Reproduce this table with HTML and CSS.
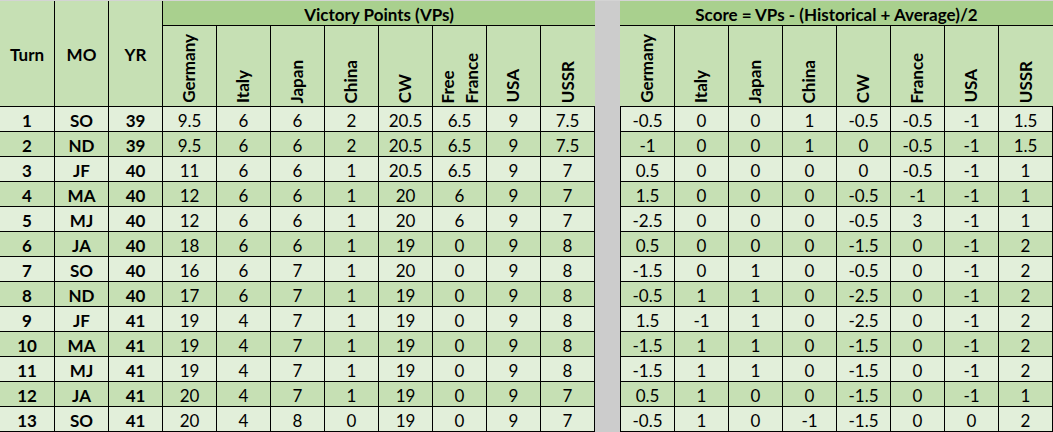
FILE: index.html
```html
<!DOCTYPE html>
<html>
<head>
<meta charset="utf-8">
<link rel="stylesheet" href="styles.css">
</head>
<body>
<div class="sheet">
  <div class="grid left">
    <div class="cell fixed b">Turn</div>
    <div class="cell fixed b">MO</div>
    <div class="cell fixed b">YR</div>
    <div class="cell band b span8">Victory Points (VPs)</div>
    <div class="cell vhead"><span class="vtext">Germany</span></div>
    <div class="cell vhead"><span class="vtext">Italy</span></div>
    <div class="cell vhead"><span class="vtext">Japan</span></div>
    <div class="cell vhead"><span class="vtext">China</span></div>
    <div class="cell vhead"><span class="vtext">CW</span></div>
    <div class="cell vhead"><span class="vtext two">Free<br>France</span></div>
    <div class="cell vhead"><span class="vtext">USA</span></div>
    <div class="cell vhead last"><span class="vtext">USSR</span></div>

    <div class="row lt"><div class="cell b">1</div><div class="cell b">SO</div><div class="cell b">39</div><div class="cell">9.5</div><div class="cell">6</div><div class="cell">6</div><div class="cell">2</div><div class="cell">20.5</div><div class="cell">6.5</div><div class="cell">9</div><div class="cell">7.5</div></div>
    <div class="row dk"><div class="cell b">2</div><div class="cell b">ND</div><div class="cell b">39</div><div class="cell">9.5</div><div class="cell">6</div><div class="cell">6</div><div class="cell">2</div><div class="cell">20.5</div><div class="cell">6.5</div><div class="cell">9</div><div class="cell">7.5</div></div>
    <div class="row lt"><div class="cell b">3</div><div class="cell b">JF</div><div class="cell b">40</div><div class="cell">11</div><div class="cell">6</div><div class="cell">6</div><div class="cell">1</div><div class="cell">20.5</div><div class="cell">6.5</div><div class="cell">9</div><div class="cell">7</div></div>
    <div class="row dk"><div class="cell b">4</div><div class="cell b">MA</div><div class="cell b">40</div><div class="cell">12</div><div class="cell">6</div><div class="cell">6</div><div class="cell">1</div><div class="cell">20</div><div class="cell">6</div><div class="cell">9</div><div class="cell">7</div></div>
    <div class="row lt"><div class="cell b">5</div><div class="cell b">MJ</div><div class="cell b">40</div><div class="cell">12</div><div class="cell">6</div><div class="cell">6</div><div class="cell">1</div><div class="cell">20</div><div class="cell">6</div><div class="cell">9</div><div class="cell">7</div></div>
    <div class="row dk"><div class="cell b">6</div><div class="cell b">JA</div><div class="cell b">40</div><div class="cell">18</div><div class="cell">6</div><div class="cell">6</div><div class="cell">1</div><div class="cell">19</div><div class="cell">0</div><div class="cell">9</div><div class="cell">8</div></div>
    <div class="row lt"><div class="cell b">7</div><div class="cell b">SO</div><div class="cell b">40</div><div class="cell">16</div><div class="cell">6</div><div class="cell">7</div><div class="cell">1</div><div class="cell">20</div><div class="cell">0</div><div class="cell">9</div><div class="cell">8</div></div>
    <div class="row dk"><div class="cell b">8</div><div class="cell b">ND</div><div class="cell b">40</div><div class="cell">17</div><div class="cell">6</div><div class="cell">7</div><div class="cell">1</div><div class="cell">19</div><div class="cell">0</div><div class="cell">9</div><div class="cell">8</div></div>
    <div class="row lt"><div class="cell b">9</div><div class="cell b">JF</div><div class="cell b">41</div><div class="cell">19</div><div class="cell">4</div><div class="cell">7</div><div class="cell">1</div><div class="cell">19</div><div class="cell">0</div><div class="cell">9</div><div class="cell">8</div></div>
    <div class="row dk"><div class="cell b">10</div><div class="cell b">MA</div><div class="cell b">41</div><div class="cell">19</div><div class="cell">4</div><div class="cell">7</div><div class="cell">1</div><div class="cell">19</div><div class="cell">0</div><div class="cell">9</div><div class="cell">8</div></div>
    <div class="row lt"><div class="cell b">11</div><div class="cell b">MJ</div><div class="cell b">41</div><div class="cell">19</div><div class="cell">4</div><div class="cell">7</div><div class="cell">1</div><div class="cell">19</div><div class="cell">0</div><div class="cell">9</div><div class="cell">8</div></div>
    <div class="row dk"><div class="cell b">12</div><div class="cell b">JA</div><div class="cell b">41</div><div class="cell">20</div><div class="cell">4</div><div class="cell">7</div><div class="cell">1</div><div class="cell">19</div><div class="cell">0</div><div class="cell">9</div><div class="cell">7</div></div>
    <div class="row lt"><div class="cell b">13</div><div class="cell b">SO</div><div class="cell b">41</div><div class="cell">20</div><div class="cell">4</div><div class="cell">8</div><div class="cell">0</div><div class="cell">19</div><div class="cell">0</div><div class="cell">9</div><div class="cell">7</div></div>
  </div>

  <div class="gap"></div>

  <div class="grid right">
    <div class="cell band b span8">Score = VPs - (Historical + Average)/2</div>
    <div class="cell vhead"><span class="vtext">Germany</span></div>
    <div class="cell vhead"><span class="vtext">Italy</span></div>
    <div class="cell vhead"><span class="vtext">Japan</span></div>
    <div class="cell vhead"><span class="vtext">China</span></div>
    <div class="cell vhead"><span class="vtext">CW</span></div>
    <div class="cell vhead"><span class="vtext">France</span></div>
    <div class="cell vhead"><span class="vtext">USA</span></div>
    <div class="cell vhead last"><span class="vtext">USSR</span></div>

    <div class="row lt"><div class="cell first">-0.5</div><div class="cell">0</div><div class="cell">0</div><div class="cell">1</div><div class="cell">-0.5</div><div class="cell">-0.5</div><div class="cell">-1</div><div class="cell">1.5</div></div>
    <div class="row dk"><div class="cell first">-1</div><div class="cell">0</div><div class="cell">0</div><div class="cell">1</div><div class="cell">0</div><div class="cell">-0.5</div><div class="cell">-1</div><div class="cell">1.5</div></div>
    <div class="row lt"><div class="cell first">0.5</div><div class="cell">0</div><div class="cell">0</div><div class="cell">0</div><div class="cell">0</div><div class="cell">-0.5</div><div class="cell">-1</div><div class="cell">1</div></div>
    <div class="row dk"><div class="cell first">1.5</div><div class="cell">0</div><div class="cell">0</div><div class="cell">0</div><div class="cell">-0.5</div><div class="cell">-1</div><div class="cell">-1</div><div class="cell">1</div></div>
    <div class="row lt"><div class="cell first">-2.5</div><div class="cell">0</div><div class="cell">0</div><div class="cell">0</div><div class="cell">-0.5</div><div class="cell">3</div><div class="cell">-1</div><div class="cell">1</div></div>
    <div class="row dk"><div class="cell first">0.5</div><div class="cell">0</div><div class="cell">0</div><div class="cell">0</div><div class="cell">-1.5</div><div class="cell">0</div><div class="cell">-1</div><div class="cell">2</div></div>
    <div class="row lt"><div class="cell first">-1.5</div><div class="cell">0</div><div class="cell">1</div><div class="cell">0</div><div class="cell">-0.5</div><div class="cell">0</div><div class="cell">-1</div><div class="cell">2</div></div>
    <div class="row dk"><div class="cell first">-0.5</div><div class="cell">1</div><div class="cell">1</div><div class="cell">0</div><div class="cell">-2.5</div><div class="cell">0</div><div class="cell">-1</div><div class="cell">2</div></div>
    <div class="row lt"><div class="cell first">1.5</div><div class="cell">-1</div><div class="cell">1</div><div class="cell">0</div><div class="cell">-2.5</div><div class="cell">0</div><div class="cell">-1</div><div class="cell">2</div></div>
    <div class="row dk"><div class="cell first">-1.5</div><div class="cell">1</div><div class="cell">1</div><div class="cell">0</div><div class="cell">-1.5</div><div class="cell">0</div><div class="cell">-1</div><div class="cell">2</div></div>
    <div class="row lt"><div class="cell first">-1.5</div><div class="cell">1</div><div class="cell">1</div><div class="cell">0</div><div class="cell">-1.5</div><div class="cell">0</div><div class="cell">-1</div><div class="cell">2</div></div>
    <div class="row dk"><div class="cell first">0.5</div><div class="cell">1</div><div class="cell">0</div><div class="cell">0</div><div class="cell">-1.5</div><div class="cell">0</div><div class="cell">-1</div><div class="cell">1</div></div>
    <div class="row lt"><div class="cell first">-0.5</div><div class="cell">1</div><div class="cell">0</div><div class="cell">-1</div><div class="cell">-1.5</div><div class="cell">0</div><div class="cell">0</div><div class="cell">2</div></div>
  </div>
</div>
</body>
</html>
```

FILE: styles.css
```css
html, body {
  margin: 0;
  padding: 0;
  background: #ffffff;
}

.sheet {
  display: flex;
  width: 1053px;
  height: 432px;
  box-sizing: border-box;
  border-top: 1px solid #d4d4d4;
  font-family: "Lato", "Liberation Sans", sans-serif;
  font-size: 17px;
  color: #000000;
  overflow: hidden;
}

.grid {
  display: grid;
  grid-template-rows: 25px 81px repeat(13, 25px);
}

.left {
  grid-template-columns: 55px repeat(10, 54px);
}

.right {
  grid-template-columns: 55px repeat(7, 54px);
}

.gap {
  width: 25px;
  background: #cccccc;
}

.row {
  display: contents;
}

.cell {
  box-sizing: border-box;
  display: flex;
  align-items: center;
  justify-content: center;
  border-right: 1px solid #000000;
  border-bottom: 1px solid #000000;
  white-space: nowrap;
  line-height: 1;
  padding-top: 2px;
}

.b {
  font-weight: 700;
}

.fixed {
  grid-row: span 2;
  background: #c6e0b4;
  padding-top: 1px;
}

.band {
  grid-column: span 8;
  background: #a9d08e;
  border-right: none;
  padding-top: 2px;
}

.vhead {
  background: #c6e0b4;
  font-weight: 700;
  align-items: flex-end;
  padding-top: 0;
  padding-bottom: 3px;
}

.vhead.last {
  border-right: none;
}

.vtext {
  writing-mode: vertical-rl;
  transform: rotate(180deg);
  line-height: 1.2;
}

.vtext.two {
  line-height: 24px;
}

.row.lt > .cell {
  background: #e2efda;
}

.row.dk > .cell {
  background: #c6e0b4;
}

.cell.first {
  border-left: 1px solid #000000;
}
```
